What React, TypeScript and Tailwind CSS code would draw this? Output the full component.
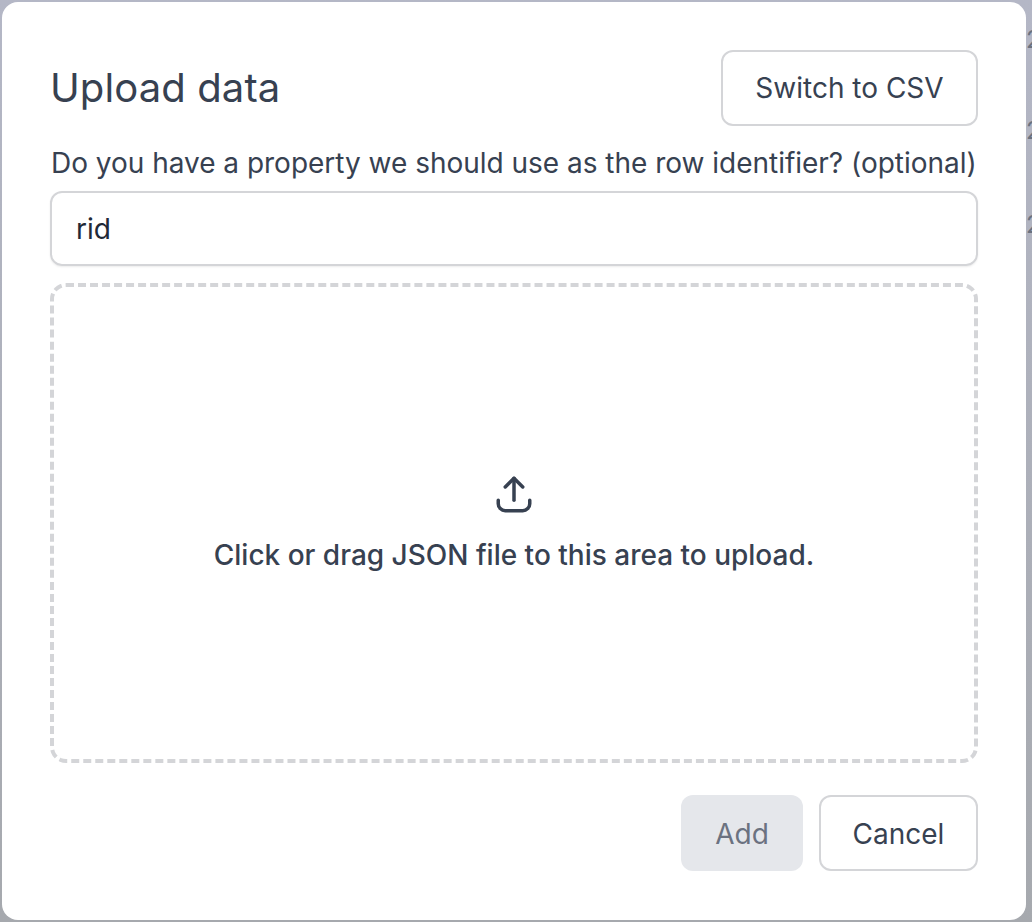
export default function App() {
  return (
    <div className="relative h-[922px] w-[1032px] overflow-hidden bg-gradient-to-b from-[#b4b7c6] to-[#a6a9ae] pb-[2px] pl-[2px] pt-[2px] font-['Inter',sans-serif] text-[#374151]">
      <div className="absolute right-0 top-0 h-[300px] w-[6px] text-[24px] leading-none text-[#6b7280]">
        <span className="absolute left-0 top-[28px]">2</span>
        <span className="absolute left-0 top-[119px]">2</span>
        <span className="absolute left-0 top-[213px]">2</span>
      </div>
      <div className="relative flex h-[918px] w-[1024px] flex-col rounded-[16px] bg-white px-[48px] pt-[48px]">
        <div className="flex h-[75px] items-center justify-between">
          <h2 className="text-[40px] font-normal leading-none tracking-[0.1px]">Upload data</h2>
          <button className="h-[76px] w-[257px] rounded-[12px] border-2 border-[#d4d5d8] bg-white pt-[1px] text-[28px]">Switch to CSV</button>
        </div>
        <label className="mt-[21px] block h-[34px] whitespace-nowrap pl-[1px] text-[28px] leading-[34px] tracking-[-0.015px]">Do you have a property we should use as the row identifier? (optional)</label>
        <div className="mt-[11px] flex h-[75px] items-center rounded-[12px] border-2 border-[#d4d5d8] pl-[24px] pt-[1px] text-[28px] text-[#1f2937] shadow-[0_1px_2px_rgba(0,0,0,0.08)]">rid</div>
        <div className="mt-[17px] flex h-[480px] flex-col items-center justify-center rounded-[16px] border-[4px] border-dashed border-[#d4d5d8] pb-[3px]">
          <svg width="42" height="42" viewBox="0 0 24 24" fill="none" stroke="#374151" strokeWidth="2" strokeLinecap="round" strokeLinejoin="round" className="mt-[1px]">
            <path d="M12 15.5V3" />
            <path d="M7 8l5-5 5 5" />
            <path d="M3 15.5v2A4 4 0 0 0 7 21.500h10a4 4 0 0 0 4-4v-2" />
          </svg>
          <p className="mt-[23px] text-[28px] font-medium leading-[34px]">Click or drag JSON file to this area to upload.</p>
        </div>
        <div className="mt-[32px] flex justify-end gap-[16px]">
          <button className="h-[76px] w-[122px] rounded-[12px] bg-[#e5e7eb] pt-[1px] text-[28px] text-[#6b7280]">Add</button>
          <button className="h-[76px] w-[159px] rounded-[12px] border-2 border-[#d4d5d8] bg-white pt-[1px] text-[28px]">Cancel</button>
        </div>
      </div>
    </div>
  );
}
